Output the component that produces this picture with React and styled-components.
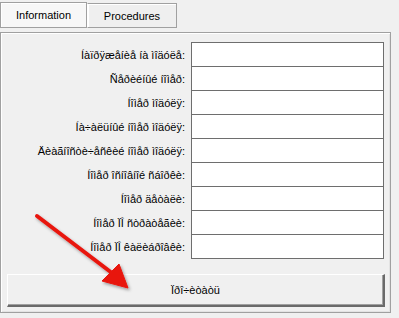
import React from "react";
import styled, { createGlobalStyle } from "styled-components";

const Global = createGlobalStyle`
  html, body {
    margin: 0;
    padding: 0;
    background: #f0f0f0;
  }
  body {
    font-family: "Liberation Sans", Arial, sans-serif;
    font-size: 11px;
    color: #000;
  }
`;

const Window = styled.div`
  position: relative;
  width: 399px;
  height: 318px;
  overflow: hidden;
  background: #f0f0f0;
`;

const TabBar = styled.div`
  display: flex;
  align-items: flex-start;
  height: 32px;
  padding-top: 2px;
  box-sizing: border-box;
`;

const Tab = styled.div`
  box-sizing: border-box;
  width: ${(p) => p.$w}px;
  height: ${(p) => (p.$active ? 26 : 25)}px;
  margin-top: ${(p) => (p.$active ? 0 : 1)}px;
  display: flex;
  align-items: center;
  justify-content: center;
  border: 1px solid #a0a0a0;
  border-left-color: ${(p) => (p.$active ? "#a0a0a0" : "#ffffff")};
  box-shadow: inset 1px 1px 0 #ffffff;
  background: ${(p) => (p.$active ? "#f7f7f7" : "#efefef")};
  font-size: 11px;
`;

const Panel = styled.div`
  box-sizing: border-box;
  width: 391px;
  height: 281px;
  border: 1px solid #a0a0a0;
  box-shadow: inset 1px 1px 0 #ffffff, inset -1px -1px 0 #e3e3e3;
  padding: 9px 6px 0 6px;
  display: flex;
  flex-direction: column;
`;

const Fields = styled.div`
  display: grid;
  grid-template-columns: 178px 193px;
  column-gap: 6px;
`;

const Label = styled.div`
  box-sizing: border-box;
  height: 24px;
  display: flex;
  align-items: center;
  justify-content: flex-end;
  white-space: nowrap;
  padding-top: 1px;
`;

const Input = styled.div`
  box-sizing: border-box;
  height: 25px;
  margin-bottom: -1px;
  background: #ffffff;
  border: 1px solid #6e6e6e;
`;

const Button = styled.div`
  box-sizing: border-box;
  margin-top: 16px;
  width: 378px;
  height: 33px;
  display: flex;
  align-items: center;
  justify-content: center;
  background: #f0f0f0;
  border-top: 1px solid #ffffff;
  border-left: 1px solid #ffffff;
  border-right: 2px solid #6a6a6a;
  border-bottom: 2px solid #6a6a6a;
  box-shadow: inset -1px -1px 0 #a0a0a0;
  font-size: 11px;
`;

const ArrowLayer = styled.svg`
  position: absolute;
  left: 0;
  top: 0;
  pointer-events: none;
`;

const labels = [
  "Íàïðÿæåíèå íà ìîäóëå:",
  "Ñåðèéíûé íîìåð:",
  "Íîìåð ìîäóëÿ:",
  "Íà÷àëüíûé íîìåð ìîäóëÿ:",
  "Äèàãíîñòè÷åñêèé íîìåð ìîäóëÿ:",
  "Íîìåð îñíîâíîé ñáîðêè:",
  "Íîìåð äåòàëè:",
  "Íîìåð ÏÎ ñòðàòåãèè:",
  "Íîìåð ÏÎ êàëèáðîâêè:",
];

export default function App() {
  return (
    <Window>
      <Global />
      <TabBar>
        <Tab $active $w={87}>Information</Tab>
        <Tab $w={90}>Procedures</Tab>
      </TabBar>
      <Panel>
        <Fields>
          {labels.map((l) => (
            <React.Fragment key={l}>
              <Label>{l}</Label>
              <Input />
            </React.Fragment>
          ))}
        </Fields>
        <Button>Ïðî÷èòàòü</Button>
      </Panel>
      <ArrowLayer width="399" height="318" viewBox="0 0 399 318">
        <defs>
          <filter id="sh" x="-20%" y="-20%" width="140%" height="140%">
            <feDropShadow dx="1.5" dy="2" stdDeviation="1.5" floodColor="#000" floodOpacity="0.35" />
          </filter>
        </defs>
        <g filter="url(#sh)" fill="#e8140f" stroke="#e8140f">
          <line x1="37" y1="216" x2="112" y2="273" strokeWidth="4" strokeLinecap="round" />
          <polygon points="102,281 119,264 128,288" strokeWidth="1" strokeLinejoin="round" />
        </g>
      </ArrowLayer>
    </Window>
  );
}
